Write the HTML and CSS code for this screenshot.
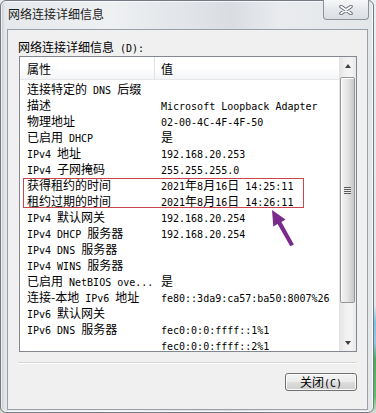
FILE: index.html
```html
<!DOCTYPE html>
<html>
  <head>
    <title>网络连接详细信息</title>
    <link rel="stylesheet" href="styles.css">
  </head>
  <body>
    <div class="window">
      <div class="titlebar">
        <span class="title">网络连接详细信息</span>
        <button class="close-button">
          <svg width="14" height="10" viewBox="0 0 14 10">
            <path d="M2 1.5 L12 8.5 M12 1.5 L2 8.5" stroke="#6e737a" stroke-width="3.6" stroke-linecap="round"/>
            <path d="M2 1.5 L12 8.5 M12 1.5 L2 8.5" stroke="#ffffff" stroke-width="1.6" stroke-linecap="round"/>
          </svg>
        </button>
      </div>

      <div class="client">
        <p class="label">网络连接详细信息<span class="en"> (D):</span></p>

        <div class="listbox">
          <div class="list-main">
            <div class="list-header">
              <div class="col-name">属性</div>
              <div class="col-value">值</div>
            </div>
            <div class="list-body">
              <div class="row"><div class="col-name">连接特定的<span class="en"> DNS </span>后缀</div><div class="col-value"></div></div>
              <div class="row"><div class="col-name">描述</div><div class="col-value"><span class="en">Microsoft Loopback Adapter</span></div></div>
              <div class="row"><div class="col-name">物理地址</div><div class="col-value"><span class="en">02-00-4C-4F-4F-50</span></div></div>
              <div class="row"><div class="col-name">已启用<span class="en"> DHCP</span></div><div class="col-value">是</div></div>
              <div class="row"><div class="col-name"><span class="en">IPv4 </span>地址</div><div class="col-value"><span class="en">192.168.20.253</span></div></div>
              <div class="row"><div class="col-name"><span class="en">IPv4 </span>子网掩码</div><div class="col-value"><span class="en">255.255.255.0</span></div></div>
              <div class="row"><div class="col-name">获得租约的时间</div><div class="col-value"><span class="en">2021</span>年<span class="en">8</span>月<span class="en">16</span>日<span class="en"> 14:25:11</span></div></div>
              <div class="row"><div class="col-name">租约过期的时间</div><div class="col-value"><span class="en">2021</span>年<span class="en">8</span>月<span class="en">16</span>日<span class="en"> 14:26:11</span></div></div>
              <div class="row"><div class="col-name"><span class="en">IPv4 </span>默认网关</div><div class="col-value"><span class="en">192.168.20.254</span></div></div>
              <div class="row"><div class="col-name"><span class="en">IPv4 DHCP </span>服务器</div><div class="col-value"><span class="en">192.168.20.254</span></div></div>
              <div class="row"><div class="col-name"><span class="en">IPv4 DNS </span>服务器</div><div class="col-value"></div></div>
              <div class="row"><div class="col-name"><span class="en">IPv4 WINS </span>服务器</div><div class="col-value"></div></div>
              <div class="row"><div class="col-name">已启用<span class="en"> NetBIOS ove...</span></div><div class="col-value">是</div></div>
              <div class="row"><div class="col-name">连接-本地<span class="en"> IPv6 </span>地址</div><div class="col-value"><span class="en">fe80::3da9:ca57:ba50:8007%26</span></div></div>
              <div class="row"><div class="col-name"><span class="en">IPv6 </span>默认网关</div><div class="col-value"></div></div>
              <div class="row"><div class="col-name"><span class="en">IPv6 DNS </span>服务器</div><div class="col-value"><span class="en">fec0:0:0:ffff::1%1</span></div></div>
              <div class="row"><div class="col-name"></div><div class="col-value"><span class="en">fec0:0:0:ffff::2%1</span></div></div>
            </div>
          </div>

          <div class="scrollbar">
            <div class="scroll-btn"><span class="arrow-up"></span></div>
            <div class="thumb"><span class="grip"></span></div>
            <div class="scroll-space"></div>
            <div class="scroll-btn"><span class="arrow-down"></span></div>
          </div>

          <!-- annotation drawn over the list -->
          <div class="mark-box"></div>
          <svg class="mark-arrow" width="26" height="40" viewBox="0 0 26 40">
            <polygon points="2,2 15.5,11.5 11.4,14 23.9,36.5 20.3,38.3 7.6,16 3.3,18.5" fill="#7a2a8a"/>
          </svg>
        </div>

        <div class="separator"></div>
        <div class="footer">
          <button class="close-dialog">关闭<span class="en">(C)</span></button>
        </div>
      </div>
    </div>
  </body>
</html>
```

FILE: styles.css
```css
* {
  box-sizing: border-box;
}

body {
  margin: 0;
  width: 376px;
  height: 413px;
  overflow: hidden;
  font-family: "Noto Sans CJK SC", sans-serif;
  font-size: 12px;
  color: #000;
  background: linear-gradient(to bottom, #eceef0 0, #e4e7ea 74%, #7cc3dd 78%, #8fc9e6 83%, #49ad55 87%, #5fbf69 96%, #d9ddd8 100%);
}

.en {
  font-family: "DejaVu Sans Mono", monospace;
  font-size: 10px;
  line-height: 1;
  white-space: pre;
}

.window {
  width: 374px;
  height: 413px;
  border: 1px solid #737a84;
  border-radius: 6px;
  padding: 0 5px 2px 6px;
  background: linear-gradient(to right, #c3c8ce 0, #e6e9ec 4px, #eef0f2 30%, #d9dde2 62%, #e9ebee 75%, #e4e7ea 100%);
  box-shadow: inset 0 0 0 1px rgba(255, 255, 255, 0.7);
}

.titlebar {
  height: 28px;
  display: flex;
  justify-content: space-between;
  align-items: flex-start;
}

.title {
  margin-top: 4px;
  padding-left: 1px;
  line-height: 18px;
  font-size: 12px;
  color: #1a1a1a;
}

.close-button {
  width: 46px;
  height: 20px;
  margin: -1px -1px 0 0;
  padding: 0;
  border: 1px solid #8d939b;
  border-top: none;
  border-radius: 0 0 4px 4px;
  background: linear-gradient(to bottom, #f6f7f8, #e4e7eb 55%, #dadee3);
  display: flex;
  align-items: center;
  justify-content: center;
}

.close-button svg {
  margin-top: 1px;
}

.client {
  height: 381px;
  border: 1px solid #98a0a9;
  background-color: #f0f0f0;
  padding: 9px 10px 0 10px;
}

.label {
  margin: 0;
  line-height: 16px;
}

.listbox {
  position: relative;
  display: flex;
  width: 338px;
  height: 296px;
  margin: 1px 0 0 1px;
  border: 1px solid #828790;
  background-color: white;
  overflow: hidden;
}

.list-main {
  flex: 1;
  overflow: hidden;
}

.list-header {
  display: flex;
  height: 23px;
  line-height: 23px;
  border-bottom: 1px solid #e5e7ea;
  background: linear-gradient(to bottom, #ffffff, #ffffff 50%, #f4f5f7);
}

.list-header .col-name {
  border-right: 1px solid #dfe2e6;
}

.col-name {
  width: 135px;
  flex: none;
  padding-left: 7px;
  white-space: nowrap;
  overflow: hidden;
}

.col-value {
  padding-left: 6px;
  white-space: nowrap;
}

.list-body {
  padding-top: 1px;
}

.row {
  display: flex;
  height: 16px;
  line-height: 16px;
}

.scrollbar {
  width: 17px;
  flex: none;
  display: flex;
  flex-direction: column;
  background: linear-gradient(to right, #e3e3e3, #f1f1f1 40%, #f4f4f4 70%, #e9e9e9);
}

.scroll-btn {
  height: 17px;
  flex: none;
  display: flex;
  align-items: center;
  justify-content: center;
}

.arrow-up {
  width: 0;
  height: 0;
  border-left: 3px solid transparent;
  border-right: 3px solid transparent;
  border-bottom: 4px solid #404040;
}

.arrow-down {
  width: 0;
  height: 0;
  border-left: 3px solid transparent;
  border-right: 3px solid transparent;
  border-top: 4px solid #404040;
}

.thumb {
  height: 226px;
  flex: none;
  margin: 3px 1px 0 1px;
  border: 1px solid #979797;
  border-radius: 2px;
  background: linear-gradient(to right, #f3f3f3, #e6e6e6 45%, #d3d3d3 80%, #c9c9c9);
  box-shadow: inset 1px 1px 0 #fbfbfb;
  display: flex;
  align-items: center;
  justify-content: center;
}

.grip {
  width: 7px;
  height: 7px;
  background: repeating-linear-gradient(to bottom, #5a5a5a 0 1px, #eaeaea 1px 2px);
}

.scroll-space {
  flex: 1;
}

.mark-box {
  position: absolute;
  left: 3px;
  top: 121px;
  width: 281px;
  height: 30px;
  border: 1px solid #c9474c;
}

.mark-arrow {
  position: absolute;
  left: 250px;
  top: 151px;
}

.separator {
  margin-top: 10px;
  height: 2px;
  border-top: 1px solid #d5d5d5;
  border-bottom: 1px solid #ffffff;
}

.footer {
  display: flex;
  justify-content: flex-end;
  padding-top: 9px;
}

.close-dialog {
  width: 72px;
  height: 18px;
  padding: 0;
  border: 1px solid #707070;
  border-radius: 3px;
  background: linear-gradient(to bottom, #f4f4f4, #ebebeb 48%, #dddddd 52%, #cfcfcf);
  box-shadow: inset 0 0 0 1px #fbfbfb;
  font-family: "Noto Sans CJK SC", sans-serif;
  font-size: 12px;
  line-height: 16px;
  color: #000;
}
```
